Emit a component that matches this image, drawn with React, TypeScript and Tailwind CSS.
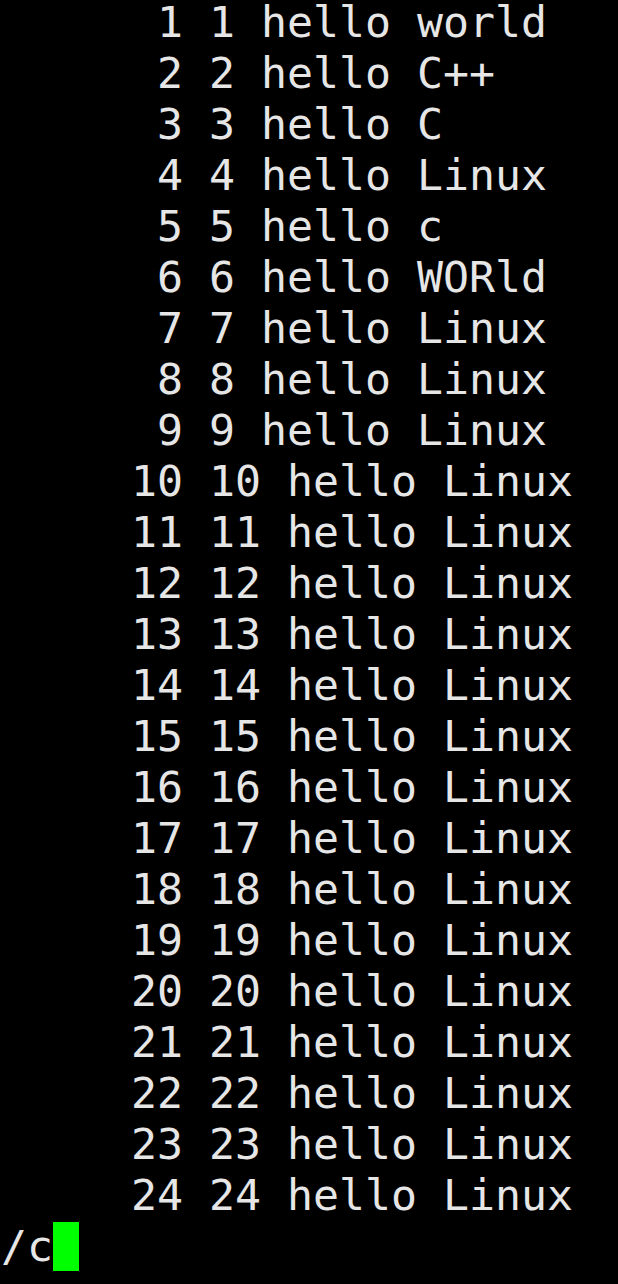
const contents: Record<number, string> = {
  1: "hello world",
  2: "hello C++",
  3: "hello C",
  5: "hello c",
  6: "hello WORld",
};

const lines = Array.from({ length: 24 }, (_, i) => {
  const n = i + 1;
  return { n, text: `${n} ${contents[n] ?? "hello Linux"}` };
});

export default function App() {
  return (
    <div className="min-h-screen w-full overflow-hidden bg-black pl-px text-[#e6e6e6] font-['DejaVu_Sans_Mono',monospace] text-[43.2px] leading-[51px]">
      <div className="-mt-[3px] flex flex-col">
        {lines.map((l) => (
          <div key={l.n} className="whitespace-pre">
            {String(l.n).padStart(7, " ") + " " + l.text}
          </div>
        ))}
        <div className="flex items-stretch whitespace-pre">
          <span>/c</span>
          <span className="my-px w-[26px] bg-[#00ff00]" />
        </div>
      </div>
    </div>
  );
}
